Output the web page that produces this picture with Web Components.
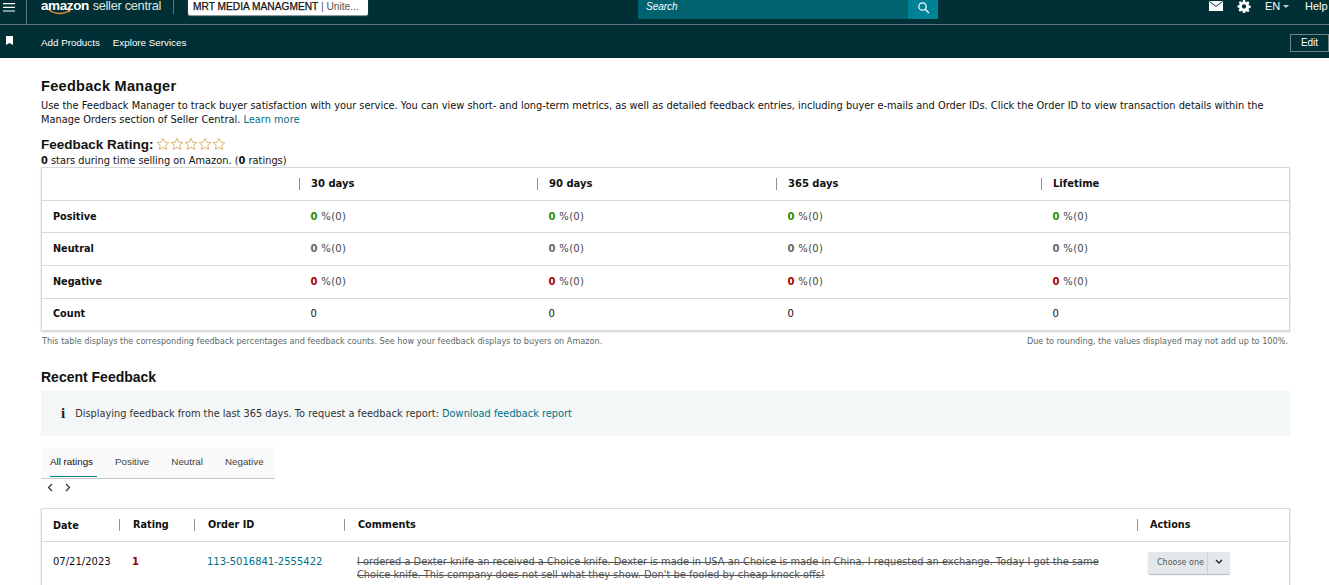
<!DOCTYPE html>
<html lang="en">
<head>
<meta charset="utf-8">
<title>Feedback Manager</title>
<style>
  html, body { margin: 0; padding: 0; background: #fff; overflow: hidden; height: 585px; }
  body { font-family: "DejaVu Sans", Verdana, sans-serif; font-size: 10px; color: #111; }
</style>
</head>
<body>
<sc-header></sc-header>
<sc-subnav></sc-subnav>
<feedback-page>
  <feedback-intro></feedback-intro>
  <metrics-table></metrics-table>
  <recent-feedback></recent-feedback>
</feedback-page>

<script>
'use strict';

function define(name, html) {
  customElements.define(name, class extends HTMLElement {
    constructor() {
      super();
      this.attachShadow({ mode: 'open' }).innerHTML = html;
    }
  });
}

const star = `<svg width="14" height="14" viewBox="0 0 24 24"><path d="M12 2.2l2.9 6.6 7.2.7-5.4 4.8 1.600 7.100L12 17.700l-6.300 3.700 1.600-7.100L1.900 9.500l7.200-.7z" fill="#fff" stroke="#d9b26a" stroke-width="1.700" stroke-linejoin="round"/></svg>`;

define('sc-header', `
  <style>
    :host { display: flex; align-items: stretch; height: 24px; background: #002f36; border-bottom: 1px solid #5f7478; color: #fff; font-family: "Liberation Sans", Arial, sans-serif; }
    .menu { width: 27px; border-right: 1px solid #5f7478; padding: 3px 0 0 3px; box-sizing: border-box; height: 24px; }
    .logo { margin-left: 14px; width: 132px; height: 14px; position: relative; line-height: 11px; white-space: nowrap; border-right: 1px solid #5f7478; }
    .logo b { font-size: 13.500px; font-weight: 700; letter-spacing: -.4px; }
    .logo span { font-size: 12.800px; letter-spacing: -.3px; color: #dfe5e5; margin-left: 1px; }
    .logo svg { position: absolute; left: 7px; top: 9px; }
    .acct { background: #fff; color: #111; height: 15px; width: 180px; margin-left: 14px; border-radius: 0 0 2px 2px; box-shadow: 0 1px 1px #9aa; font-size: 10.200px; line-height: 14px; padding-left: 5px; box-sizing: border-box; white-space: nowrap; overflow: hidden; }
    .acct b { font-weight: 400; -webkit-text-stroke: .25px #111; }
    .acct i { font-style: normal; color: #555; }
    .search { margin-left: 270px; width: 300px; height: 19px; background: #00626f; display: flex; justify-content: space-between; font-size: 10px; font-style: italic; line-height: 14px; }
    .search span { padding-left: 8px; }
    .search div { width: 30px; height: 19px; background: #008296; display: flex; justify-content: center; padding-top: 1px; box-sizing: border-box; }
    .right { margin-left: auto; display: flex; align-items: flex-start; font-size: 11px; line-height: 13px; }
    .right svg { display: block; }
    .gear { margin-left: 14px; }
    .en { margin-left: 14px; width: 26px; display: flex; gap: 3px; }
    .en::after { content: ''; border: 3.500px solid transparent; border-top: 3px solid #ccd; margin-top: 5px; }
    .help { margin-left: 14px; width: 24px; }
  </style>
  <div class="menu"><svg width="12" height="9" viewBox="0 0 12 9"><path d="M0 0h12v1.200H0zM0 3.700h12v1.200H0zM0 7.400h12v1.200H0z" fill="#fff"/></svg></div>
  <div class="logo"><b>amazon</b> <span>seller central</span>
    <svg width="26" height="7" viewBox="0 0 26 7"><path d="M1 1c6 4.500 14 4.500 20 1" fill="none" stroke="#e8912d" stroke-width="1.300"/><path d="M19 .8l3.600.2-.8 3z" fill="#e8912d"/></svg>
  </div>
  <div class="acct"><b>MRT MEDIA MANAGMENT</b> <i>| Unite...</i></div>
  <div class="search"><span>Search</span><div><svg width="13" height="13" viewBox="0 0 13 13"><circle cx="5.500" cy="5.500" r="3.700" fill="none" stroke="#fff" stroke-width="1.200"/><path d="M8.300 8.300l3.500 3.600" stroke="#fff" stroke-width="1.400"/></svg></div></div>
  <div class="right">
    <svg width="14" height="12" viewBox="0 0 14 12"><path d="M0 1h14v10H0z" fill="#fff"/><path d="M.5 1.500L7 6.500l6.500-5" fill="none" stroke="#002f36"/></svg>
    <svg class="gear" width="14" height="13" viewBox="0 0 24 24"><path fill="#fff" fill-rule="evenodd" d="M10 0h4l.6 3.300 2 .8L19.400 2.200l2.800 2.800-1.900 2.800.8 2 3.300.6v4l-3.300.6-.8 2 1.900 2.800-2.800 2.800-2.800-1.900-2 .8L14 24h-4l-.6-3.300-2-.8-2.800 1.900-2.800-2.800 1.900-2.800-.8-2L0 14v-4l3.300-.6.8-2L2.200 4.600 5 1.800l2.600 2.300 2-.8zM12 8a4 4 0 100 8 4 4 0 000-8z"/></svg>
    <span class="en">EN</span>
    <span class="help">Help</span>
  </div>
`);

define('sc-subnav', `
  <style>
    :host { display: flex; align-items: center; height: 33px; background: #002f36; color: #fff; font-family: "Liberation Sans", Arial, sans-serif; font-size: 9.800px; }
    svg { margin: 0 0 3px 6px; }
    .links { margin-left: 28px; display: flex; gap: 13px; margin-top: 1px; }
    .edit { margin-left: auto; width: 39px; height: 18px; border: 1px solid #6f8286; box-sizing: border-box; text-align: center; line-height: 16px; margin-top: 2px; font-size: 10px; }
  </style>
  <svg width="7" height="9" viewBox="0 0 7 9"><path d="M0 0h7v9L3.500 7 0 9z" fill="#fff"/></svg>
  <div class="links"><a>Add Products</a><a>Explore Services</a></div>
  <div class="edit">Edit</div>
`);

define('feedback-page', `
  <style>
    :host { display: block; padding: 0 39px 0 41px; }
  </style>
  <slot></slot>
`);

define('feedback-intro', `
  <style>
    :host { display: block; font-family: "DejaVu Sans", Verdana, sans-serif; font-size: 9.830px; line-height: 14px; color: #111; }
    h1 { margin: 0; padding-top: 20px; font: 700 14.500px/17px "Liberation Sans", Arial, sans-serif; letter-spacing: .3px; color: #111; }
    p { margin: 4px 0 0; line-height: 14px; }
    a { color: #007185; }
    h2 { margin: 0; padding-top: 10px; display: flex; align-items: center; gap: 2px; font: 700 13.500px/16px "Liberation Sans", Arial, sans-serif; height: 16px; }
    .stars { display: flex; margin-top: -3px; }
    .sub { line-height: 12px; margin-top: 2px; height: 12px; }
  </style>
  <h1>Feedback Manager</h1>
  <p>Use the Feedback Manager to track buyer satisfaction with your service. You can view short- and long-term metrics, as well as detailed feedback entries, including buyer e-mails and Order IDs. Click the Order ID to view transaction details within the Manage Orders section of Seller Central. <a>Learn more</a></p>
  <h2>Feedback Rating:<span class="stars">${star.repeat(5)}</span></h2>
  <div class="sub"><b>0</b> stars during time selling on Amazon. (<b>0</b> ratings)</div>
`);

const pct = (c, cls = '') => `<div class="${cls}"><span class="p"><b style="color:${c}">0</b> %(0)</span></div>`.repeat(4);

define('metrics-table', `
  <style>
    :host { display: block; font-size: 10px; }
    .t { display: grid; grid-template-columns: 257px 238px 239px 265px 1fr; border: 1px solid #d5d9d9; box-shadow: 0 1px 2px rgba(0,0,0,.2); }
    .t > * { height: 31.700px; display: flex; align-items: center; border-bottom: 1px solid #d5d9d9; padding-left: 11.600px; }
    .t > .up { height: 29.700px; padding-bottom: 2px; }
    .t > .last { border-bottom: 0; }
    .t > b { color: #111; font-size: 9.700px; padding-left: 11px; }
    .p { letter-spacing: .3px; color: #444; }
    .h { font-weight: 700; padding-left: 0 !important; }
    .h span { border-left: 1px solid #8d9696; padding-left: 11px; height: 12px; line-height: 12px; }
    .notes { display: flex; justify-content: space-between; font-size: 8.150px; color: #5a6868; padding: 5px 2px 0 1px; line-height: 11px; }
  </style>
  <div class="t">
    <div></div><div class="h"><span>30 days</span></div><div class="h"><span>90 days</span></div><div class="h"><span>365 days</span></div><div class="h"><span>Lifetime</span></div>
    <b>Positive</b>${pct('#2a8a00')}
    <b class="up">Neutral</b>${pct('#666', 'up')}
    <b>Negative</b>${pct('#a50000')}
    <b class="last up">Count</b><div class="last up">0</div><div class="last up">0</div><div class="last up">0</div><div class="last up">0</div>
  </div>
  <div class="notes"><span>This table displays the corresponding feedback percentages and feedback counts. See how your feedback displays to buyers on Amazon.</span><span>Due to rounding, the values displayed may not add up to 100%.</span></div>
`);

define('recent-feedback', `
  <style>
    :host { display: block; }
    h2 { margin: 0; padding-top: 22px; font: 700 14px/17px "Liberation Sans", Arial, sans-serif; color: #111; }
    .info { margin-top: 5px; height: 45px; background: #f3f7f7; display: flex; align-items: center; padding-left: 20px; gap: 10px; font-size: 9.800px; color: #333; }
    .info b { font: 900 15px "Liberation Serif", serif; color: #222; }
    .info a { color: #007185; }
    .tabs { margin-top: 11px; height: 31px; background: #fafafa; border-bottom: 1px solid #c4c8c8; display: flex; font: 9.800px/30px "Liberation Sans", Arial, sans-serif; color: #444; padding-left: 9px; width: 225px; gap: 22px; }
    .tabs .on { color: #111; border-bottom: 1px solid #008296; height: 29px; padding-right: 4px; margin-right: -4px; }
    .arrows { display: flex; gap: 12px; padding: 4px 0 0 6px; height: 13px; }
    .tbl { margin-top: 12px; border: 1px solid #d5d9d9; box-shadow: 0 1px 2px rgba(0,0,0,.2); display: grid; grid-template-columns: 77px 75px 150px 793px 1fr; font-size: 10px; }
    .tbl .h { height: 32px; display: flex; align-items: center; border-bottom: 1px solid #d5d9d9; font-weight: 700; font-size: 9.700px; }
    .tbl .h span { border-left: 1px solid #8d9696; padding-left: 13px; height: 12px; line-height: 12px; }
    .tbl .h.first { padding-left: 11px; }
    .tbl .h.end span { padding-left: 12px; }
    .c { padding: 13px 0 0 13px; line-height: 13px; height: 60px; }
    .c.first { padding-left: 11px; }
    .c a { color: #007185; }
    .c b { color: #960000; }
    .s { text-decoration: line-through; color: #555; padding-right: 30px; font-size: 9.830px; }
    .btn { width: 82px; height: 22px; background: #e3e9ea; display: flex; border-radius: 2px; box-shadow: 0 1px 1px #bbb; font-size: 8px; color: #555; line-height: 22px; margin: -3px 0 0 -2px; }
    .btn span { padding-left: 9px; width: 60px; border-right: 1px solid #ccd3d4; box-sizing: border-box; }
    .btn svg { margin: 7px 0 0 7px; }
  </style>
  <h2>Recent Feedback</h2>
  <div class="info"><b>i</b><span>Displaying feedback from the last 365 days. To request a feedback report: <a>Download feedback report</a></span></div>
  <div class="tabs"><span class="on">All ratings</span><span>Positive</span><span>Neutral</span><span>Negative</span></div>
  <div class="arrows">
    <svg width="6" height="9" viewBox="0 0 6 9"><path d="M5 1L1.500 4.500 5 8" fill="none" stroke="#333" stroke-width="1.200"/></svg>
    <svg width="6" height="9" viewBox="0 0 6 9"><path d="M1 1l3.500 3.500L1 8" fill="none" stroke="#333" stroke-width="1.200"/></svg>
  </div>
  <div class="tbl">
    <div class="h first">Date</div><div class="h"><span>Rating</span></div><div class="h"><span>Order ID</span></div><div class="h"><span>Comments</span></div><div class="h end"><span>Actions</span></div>
    <div class="c first">07/21/2023</div>
    <div class="c"><b>1</b></div>
    <div class="c"><a>113-5016841-2555422</a></div>
    <div class="c s">I ordered a Dexter knife an received a Choice knife. Dexter is made in USA an Choice is made in China. I requested an exchange. Today I got the same Choice knife. This company does not sell what they show. Don't be fooled by cheap knock offs!</div>
    <div class="c"><div class="btn"><span>Choose one</span><svg width="8" height="6" viewBox="0 0 8 6"><path d="M1 1l3 3 3-3" fill="none" stroke="#222" stroke-width="1.300"/></svg></div></div>
  </div>
`);
</script>
</body>
</html>
